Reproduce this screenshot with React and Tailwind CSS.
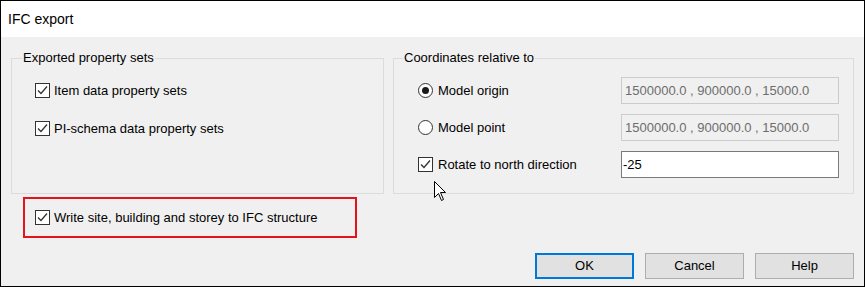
import React from 'react'

const font = { fontFamily: '"Liberation Sans", Arial, sans-serif' }

function CheckBox({ checked = true }) {
  return (
    <span className="w-[15px] h-[15px] border border-[#333333] bg-white flex items-center justify-center shrink-0">
      {checked && (
        <svg width="13" height="13" viewBox="0 0 13 13">
          <path d="M2 6.5 L5 9.5 L11 2.5" fill="none" stroke="#333333" strokeWidth="1.3" />
        </svg>
      )}
    </span>
  )
}

function Radio({ checked }) {
  return (
    <span className="w-[15px] h-[15px] rounded-full border border-[#333333] bg-white flex items-center justify-center shrink-0">
      {checked && <span className="w-[7px] h-[7px] rounded-full bg-[#1a1a1a]" />}
    </span>
  )
}

function Check({ label }) {
  return (
    <div className="flex items-center gap-[4px] h-[18px]">
      <CheckBox />
      <span className="text-[13px] leading-none text-black">{label}</span>
    </div>
  )
}

function Btn({ children, primary }) {
  return (
    <button
      className={
        primary
          ? 'w-[99px] h-[26px] bg-[#e1e1e1] border-2 border-[#0078d7] text-[13px] text-black'
          : 'w-[99px] h-[26px] bg-[#e1e1e1] border border-[#adadad] text-[13px] text-black'
      }
    >
      {children}
    </button>
  )
}

export default function App() {
  return (
    <div className="w-[865px] h-[287px] border border-black bg-[#f0f0f0] relative overflow-hidden" style={font}>
      {/* title bar */}
      <div className="h-[36px] bg-white flex items-center pl-[7px]">
        <span className="text-[14px] text-black">IFC export</span>
      </div>

      <div className="h-[249px] flex flex-col px-[10px] pt-[13px]">
        <div className="flex gap-[9px]">
          {/* left group */}
          <fieldset className="w-[373px] h-[144px] border border-[#dcdcdc] pl-[23px]">
            <legend className="ml-[-13px] px-[1px] text-[13px] leading-[16px] text-black">Exported property sets</legend>
            <div className="flex flex-col gap-[20px] mt-[15px]">
              <Check label="Item data property sets" />
              <Check label="PI-schema data property sets" />
            </div>
          </fieldset>

          {/* right group */}
          <fieldset className="w-[461px] h-[144px] border border-[#dcdcdc] pl-[24px] pr-[14px]">
            <legend className="ml-[-15px] px-[1px] text-[13px] leading-[16px] text-black">Coordinates relative to</legend>
            <div className="flex flex-col gap-[10px] mt-[11px]">
              <div className="flex items-center justify-between h-[27px]">
                <div className="flex items-center gap-[5px]">
                  <Radio checked />
                  <span className="text-[13px] leading-none">Model origin</span>
                </div>
                <div className="w-[218px] h-[27px] border border-[#cccccc] bg-[#f0f0f0] flex items-center pl-[3px] text-[13px] text-[#6d6d6d]">
                  1500000.0 , 900000.0 , 15000.0
                </div>
              </div>
              <div className="flex items-center justify-between h-[27px]">
                <div className="flex items-center gap-[5px]">
                  <Radio />
                  <span className="text-[13px] leading-none">Model point</span>
                </div>
                <div className="w-[218px] h-[27px] border border-[#cccccc] bg-[#f0f0f0] flex items-center pl-[3px] text-[13px] text-[#6d6d6d]">
                  1500000.0 , 900000.0 , 15000.0
                </div>
              </div>
              <div className="flex items-center justify-between h-[27px]">
                <div className="flex items-center gap-[5px]">
                  <CheckBox />
                  <span className="text-[13px] leading-none">Rotate to north direction</span>
                </div>
                <div className="w-[218px] h-[27px] border border-[#7a7a7a] bg-white flex items-center pl-[1px] text-[13px] text-black">
                  -25
                </div>
              </div>
            </div>
          </fieldset>
        </div>

        <div className="flex-1 flex justify-between">
          <div className="mt-[3px] ml-[12px] w-[334px] h-[41px] border-2 border-[#e4141c] flex items-center pl-[10px]">
            <Check label="Write site, building and storey to IFC structure" />
          </div>
          <div className="self-end mb-[7px] flex gap-[11px]">
            <Btn primary>OK</Btn>
            <Btn>Cancel</Btn>
            <Btn>Help</Btn>
          </div>
        </div>
      </div>

      {/* mouse cursor */}
      <svg className="absolute left-[433px] top-[180px]" width="13" height="21" viewBox="0 0 13 21">
        <path d="M0.5 0.5 L0.5 16.5 L4.5 12.5 L7.5 19.5 L9.5 18.5 L6.5 11.5 L11.5 11.5 Z" fill="white" stroke="black" strokeWidth="1" />
      </svg>
    </div>
  )
}
